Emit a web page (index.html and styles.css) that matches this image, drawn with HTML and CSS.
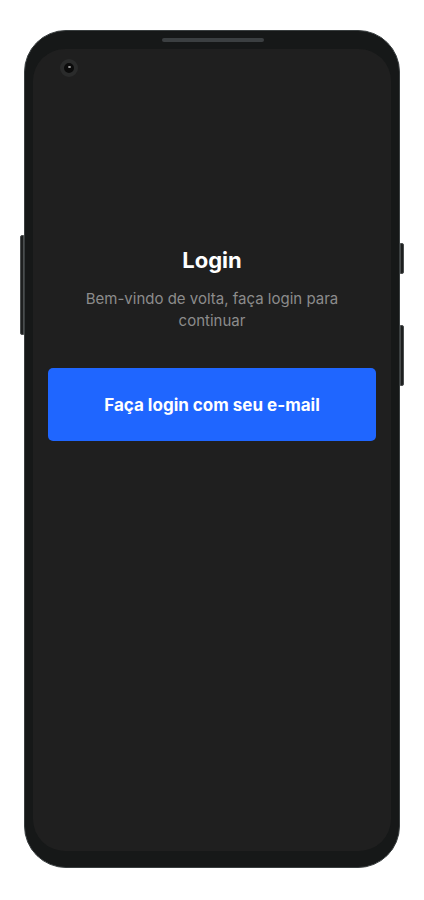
FILE: index.html
```html
<!DOCTYPE html>
<html lang="pt-BR">
<head>
    <meta charset="UTF-8">
    <meta name="viewport" content="width=device-width, initial-scale=1.0">
    <title>Login</title>
    <link rel="stylesheet" href="styles.css">
</head>
<body>
    <div class="phone">
        <span class="side-btn left-btn"></span>
        <span class="side-btn right-btn-top"></span>
        <span class="side-btn right-btn-bottom"></span>
        <span class="speaker"></span>

        <div class="screen">
            <span class="camera"></span>

            <div class="login">
                <h1 class="title">Login</h1>
                <p class="subtitle">Bem-vindo de volta, faça login para continuar</p>
                <button class="email-btn">Faça login com seu e-mail</button>
            </div>
        </div>
    </div>
</body>
</html>
```

FILE: styles.css
```css
body {
    margin: 0;
    padding: 30px 0 0;
    background: #ffffff;
    font-family: Inter, "Noto Sans", sans-serif;
    display: flex;
    justify-content: center;
}

.phone {
    position: relative;
    width: 376px;
    height: 838px;
    box-sizing: border-box;
    padding: 18px 8px 16px;
    background: #161818;
    border: 1px solid #3a3f40;
    border-radius: 42px;
    display: flex;
}

/* hardware bits around the frame */
.side-btn {
    position: absolute;
    width: 4px;
    background: #1d1f1f;
    border: 1px solid #4a4d4e;
    box-sizing: border-box;
}

.left-btn {
    left: -5px;
    top: 204px;
    height: 100px;
    border-radius: 2px 0 0 2px;
}

.right-btn-top {
    right: -5px;
    top: 212px;
    height: 31px;
    border-radius: 0 2px 2px 0;
}

.right-btn-bottom {
    right: -5px;
    top: 294px;
    height: 61px;
    border-radius: 0 2px 2px 0;
}

.speaker {
    position: absolute;
    top: 7px;
    left: 137px;
    width: 102px;
    height: 4px;
    background: #3b3f41;
    border-radius: 3px;
}

.screen {
    position: relative;
    flex: 1;
    background: #1f1f1f;
    border-radius: 32px;
    display: flex;
    flex-direction: column;
}

.camera {
    position: absolute;
    top: 10px;
    left: 27px;
    width: 10px;
    height: 10px;
    border-radius: 50%;
    background: #0b0b0b;
    border: 4px solid #2a2b2b;
}

.camera::after {
    content: "";
    position: absolute;
    top: 3px;
    left: 4px;
    width: 3px;
    height: 2px;
    border-radius: 50%;
    background: #a0a0a0;
}

.login {
    padding: 197px 15px 0;
    display: flex;
    flex-direction: column;
    align-items: center;
}

.title {
    margin: 0;
    font-size: 22px;
    line-height: 28px;
    font-weight: 700;
    color: #ffffff;
}

.subtitle {
    margin: 14px 0 0;
    max-width: 280px;
    font-size: 15px;
    line-height: 22px;
    color: #8c8c8c;
    text-align: center;
}

.email-btn {
    margin-top: 36px;
    width: 100%;
    height: 73px;
    border: none;
    border-radius: 5px;
    background: #1f66ff;
    color: #ffffff;
    font-family: inherit;
    font-size: 17px;
    font-weight: 700;
    cursor: pointer;
}
```
